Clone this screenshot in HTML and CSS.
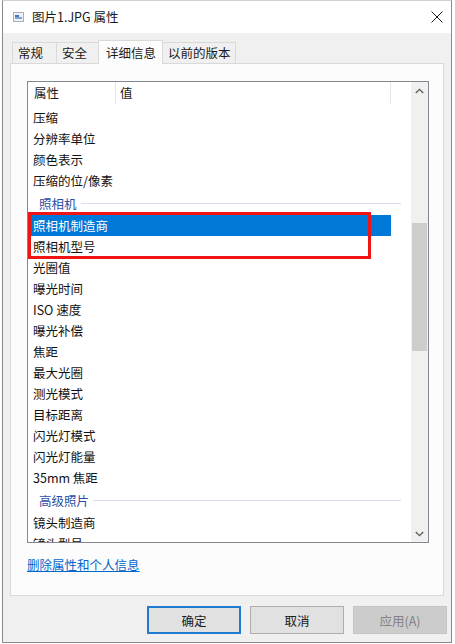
FILE: index.html
```html
<!DOCTYPE html>
<html lang="zh-CN">
<head>
<meta charset="utf-8">
<title>图片1.JPG 属性</title>
<link rel="stylesheet" href="styles.css">
</head>
<body>
<div class="window">
  <div class="titlebar">
    <svg class="app-icon" width="11" height="10" viewBox="0 0 11 10">
      <rect x="0.5" y="0.5" width="10" height="9" fill="#eef2f7" stroke="#a7b0bb"/>
      <rect x="2" y="3" width="4" height="2" fill="#3f74b5"/>
      <rect x="2" y="5" width="7" height="2" fill="#7fa4cf"/>
    </svg>
    <span class="title">图片1.JPG 属性</span>
    <svg class="close" width="12" height="12" viewBox="0 0 12 12">
      <path d="M0.5 0.5 L11.5 11.5 M11.5 0.5 L0.5 11.5" stroke="#1a1a1a" stroke-width="1"/>
    </svg>
  </div>
  <div class="body">
    <div class="tabs">
      <div class="tab">常规</div>
      <div class="tab">安全</div>
      <div class="tab active">详细信息</div>
      <div class="tab">以前的版本</div>
    </div>
    <div class="panel">
      <div class="listbox">
        <div class="list-content">
          <div class="list-header">
            <div class="col-name">属性</div>
            <div class="col-value">值</div>
          </div>
          <div class="row">压缩</div>
          <div class="row">分辨率单位</div>
          <div class="row">颜色表示</div>
          <div class="row">压缩的位/像素</div>
          <div class="group"><span>照相机</span><i class="group-line"></i></div>
          <div class="row selected">照相机制造商</div>
          <div class="row">照相机型号</div>
          <div class="row">光圈值</div>
          <div class="row">曝光时间</div>
          <div class="row">ISO 速度</div>
          <div class="row">曝光补偿</div>
          <div class="row">焦距</div>
          <div class="row">最大光圈</div>
          <div class="row">测光模式</div>
          <div class="row">目标距离</div>
          <div class="row">闪光灯模式</div>
          <div class="row">闪光灯能量</div>
          <div class="row">35mm 焦距</div>
          <div class="group"><span>高级照片</span><i class="group-line"></i></div>
          <div class="row">镜头制造商</div>
          <div class="row">镜头型号</div>
        </div>
        <div class="scrollbar">
          <div class="sb-btn">
            <svg width="9" height="6" viewBox="0 0 9 6"><polyline points="0.8,5 4.5,1.3 8.2,5" fill="none" stroke="#5a5a5a" stroke-width="1.3"/></svg>
          </div>
          <div class="sb-track-top"></div>
          <div class="sb-thumb"></div>
          <div class="sb-track-rest"></div>
          <div class="sb-btn">
            <svg width="9" height="6" viewBox="0 0 9 6"><polyline points="0.8,1 4.5,4.7 8.2,1" fill="none" stroke="#5a5a5a" stroke-width="1.3"/></svg>
          </div>
        </div>
        <div class="annotation"></div>
      </div>
      <a class="link" href="#">删除属性和个人信息</a>
    </div>
    <div class="buttons">
      <div class="btn default">确定</div>
      <div class="btn">取消</div>
      <div class="btn disabled">应用(A)</div>
    </div>
  </div>
</div>
</body>
</html>
```
FILE: styles.css
```css
* { box-sizing: border-box; }

html, body {
  margin: 0;
  padding: 0;
}

body {
  width: 455px;
  height: 644px;
  background: #ffffff;
  font-family: "Microsoft YaHei", "Noto Sans CJK SC", "Noto Sans", sans-serif;
  font-size: 12.5px;
  color: #1a1a1a;
  overflow: hidden;
}

.window {
  margin-left: 2px;
  width: 450px;
  height: 643px;
  border: 1px solid #8a8a8a;
  border-top-color: #d0d0d0;
  display: flex;
  flex-direction: column;
}

.titlebar {
  height: 32px;
  flex: none;
  background: #ffffff;
  display: flex;
  align-items: center;
  padding: 0 8px 0 10px;
}

.app-icon {
  flex: none;
  margin-right: 8px;
}

.title {
  flex: 1;
  line-height: 16px;
  color: #1a1a1a;
}

.close {
  flex: none;
}

.body {
  flex: 1;
  background: #f0f0f0;
  padding: 7px 7px 0 7px;
  display: flex;
  flex-direction: column;
}

.tabs {
  height: 23px;
  display: flex;
  align-items: flex-end;
  padding-left: 2px;
}

.tab {
  height: 21px;
  min-width: 45px;
  padding: 0 4px 0 5px;
  margin-right: -1px;
  border: 1px solid #d9d9d9;
  border-bottom: none;
  background: #f0f0f0;
  line-height: 20px;
  white-space: nowrap;
}

.tab.active {
  position: relative;
  z-index: 1;
  height: 24px;
  margin: 0 -1px -1px -2px;
  padding: 0 6px 0 7px;
  background: #fcfcfc;
  line-height: 23px;
}

.panel {
  width: 434px;
  height: 533px;
  background: #fcfcfc;
  border: 1px solid #d9d9d9;
  padding: 17px 14px 0 16px;
}

.listbox {
  position: relative;
  width: 402px;
  height: 462px;
  border: 1px solid #828790;
  background: #ffffff;
  display: flex;
  overflow: hidden;
}

.list-content {
  flex: 1;
  overflow: hidden;
}

.list-header {
  display: flex;
  height: 22px;
  margin-bottom: 3px;
  line-height: 22px;
}

.col-name {
  width: 88px;
  padding-left: 6px;
  border-right: 1px solid #e5e5e5;
}

.col-value {
  width: 275px;
  padding-left: 4px;
  border-right: 1px solid #e5e5e5;
}

.row {
  width: 363px;
  height: 21px;
  line-height: 21px;
  padding-left: 5px;
  color: #111111;
  white-space: nowrap;
}

.row.selected {
  background: #0078d7;
  color: #ffffff;
}

.group {
  height: 24px;
  display: flex;
  align-items: center;
  padding: 0 10px 0 11px;
  color: #2a4ea6;
}

.group-line {
  flex: 1;
  height: 1px;
  margin-left: 4px;
  background: #d6deee;
}

.scrollbar {
  width: 17px;
  flex: none;
  background: #f0f0f0;
  display: flex;
  flex-direction: column;
}

.sb-btn {
  height: 17px;
  flex: none;
  display: flex;
  align-items: center;
  justify-content: center;
}

.sb-track-top {
  height: 124px;
  flex: none;
}

.sb-thumb {
  height: 128px;
  flex: none;
  margin: 0 1px;
  background: #cdcdcd;
}

.sb-track-rest {
  flex: 1;
}

.annotation {
  position: absolute;
  left: 0;
  top: 130px;
  width: 343px;
  height: 47px;
  border: 3px solid #f01414;
  pointer-events: none;
}

.link {
  display: inline-block;
  margin-top: 14px;
  line-height: 16px;
  color: #0066cc;
  text-decoration: underline;
}

.buttons {
  display: flex;
  justify-content: flex-end;
  gap: 9px;
  margin-top: 10px;
  margin-right: -3px;
}

.btn {
  width: 94px;
  height: 28px;
  background: #e1e1e1;
  border: 1px solid #adadad;
  display: flex;
  align-items: center;
  justify-content: center;
  color: #1a1a1a;
}

.btn.default {
  border: 2px solid #1e7bd0;
}

.btn.disabled {
  background: #cccccc;
  border-color: #c4c4c4;
  color: #838383;
}
```
